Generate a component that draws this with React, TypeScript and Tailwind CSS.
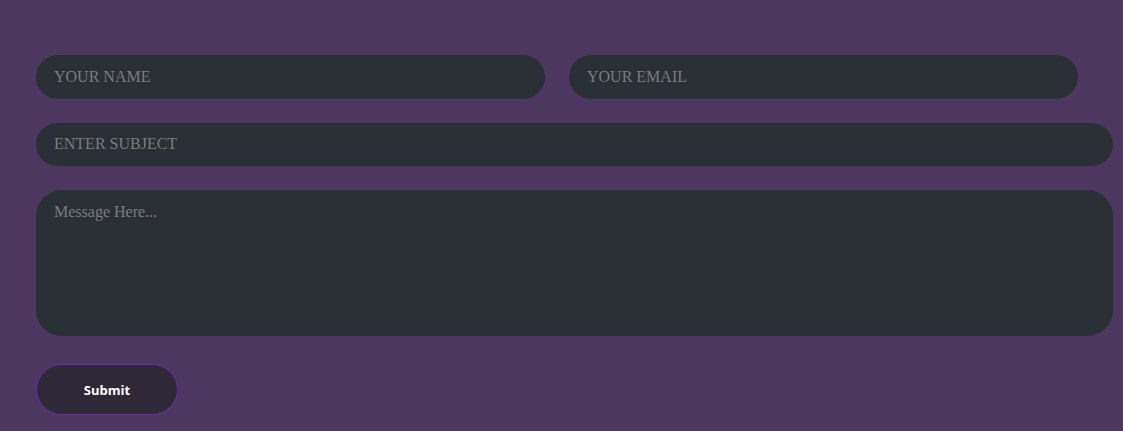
export default function App() {
  const field =
    "rounded-full bg-[#2a2f36] px-[18px] text-[16px] text-[#cfcfcf] placeholder:text-[#7b7b7b] outline-none";
  return (
    <div className="min-h-[431px] w-full bg-[#4b375f] pt-[55px] pl-[36px] pr-[10px]">
      <form
        className="flex w-[1077px] flex-col"
        style={{ fontFamily: '"Liberation Serif", serif' }}
        onSubmit={(e) => e.preventDefault()}
      >
        <div className="flex gap-[24px]">
          <input className={`${field} h-[44px] w-[509px]`} placeholder="YOUR NAME" />
          <input className={`${field} h-[44px] w-[509px]`} placeholder="YOUR EMAIL" />
        </div>
        <input
          className={`${field} mt-[24px] h-[43px] w-full pb-[2px]`}
          placeholder="ENTER SUBJECT"
        />
        <textarea
          className="mt-[24px] h-[146px] w-full resize-none rounded-[26px] bg-[#2a2f36] px-[18px] py-[10px] text-[16px] text-[#cfcfcf] placeholder:text-[#7b7b7b] outline-none"
          placeholder="Message Here..."
        />
        <div className="mt-[28px]">
          <button
            type="submit"
            className="h-[51px] w-[142px] rounded-full border border-[#6a2bb8] bg-[#2f2836] pt-[2px] text-[13px] font-bold text-white"
            style={{ fontFamily: '"Open Sans", sans-serif' }}
          >
            Submit
          </button>
        </div>
      </form>
    </div>
  );
}
